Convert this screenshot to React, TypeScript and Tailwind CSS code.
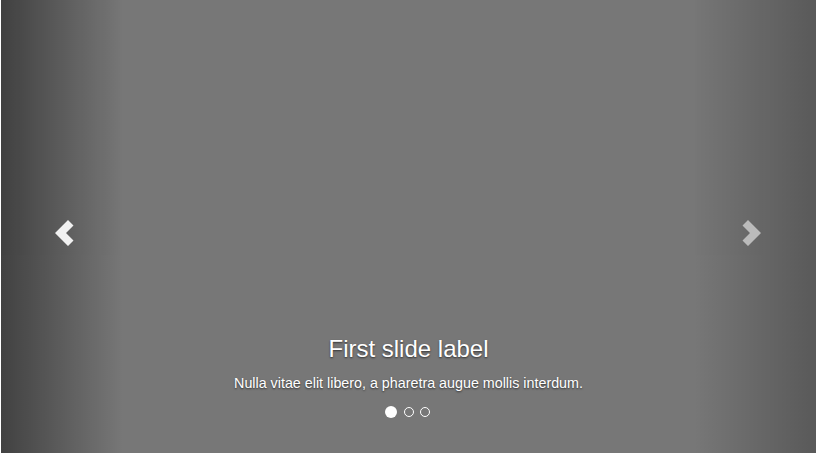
const Chevron = ({ dir }: { dir: "left" | "right" }) => (
  <svg width="19" height="28" viewBox="0 0 19 28" className={dir === "right" ? "-scale-x-100" : ""}>
    <polygon points="0,14 13,1 18.5,6.5 11,14 18.5,21.5 13,27" fill="#fff" />
  </svg>
);

const slides = ["First slide", "Second slide", "Third slide"];

export default function App() {
  return (
    <div className="w-[816px] h-[455px] bg-white pl-px pb-[2px] font-['Liberation_Sans',Arial,sans-serif]">
      <div className="relative w-full h-full overflow-hidden bg-[#777]">
        {/* prev */}
        <a className="absolute left-0 top-0 bottom-0 w-[15%] flex items-start pt-[219px] pl-[54px] opacity-90 bg-[linear-gradient(to_right,rgba(0,0,0,.5),rgba(0,0,0,.0001))]">
          <Chevron dir="left" />
        </a>
        {/* next */}
        <a className="absolute right-0 top-0 bottom-0 w-[15%] flex items-start justify-end pt-[219px] pr-[55px] opacity-50 bg-[linear-gradient(to_right,rgba(0,0,0,.0001),rgba(0,0,0,.5))]">
          <Chevron dir="right" />
        </a>

        <div className="absolute top-[336px] left-[20%] right-[20%] text-center text-white [text-shadow:0_1px_2px_rgba(0,0,0,.6)]">
          <h3 className="text-[24px] leading-[26px]">First slide label</h3>
          <p className="mt-[11px] text-[14.3px] leading-[20px]">
            Nulla vitae elit libero, a pharetra augue mollis interdum.
          </p>
        </div>

        <ol className="absolute top-[406px] left-0 right-0 flex items-center justify-center">
          {slides.map((s, i) =>
            i === 0 ? (
              <li key={s} className="w-[12px] h-[12px] rounded-full bg-white mr-[4px]" />
            ) : (
              <li key={s} className="w-[10px] h-[10px] rounded-full border border-white mx-[3px]" />
            )
          )}
        </ol>
      </div>
    </div>
  );
}
